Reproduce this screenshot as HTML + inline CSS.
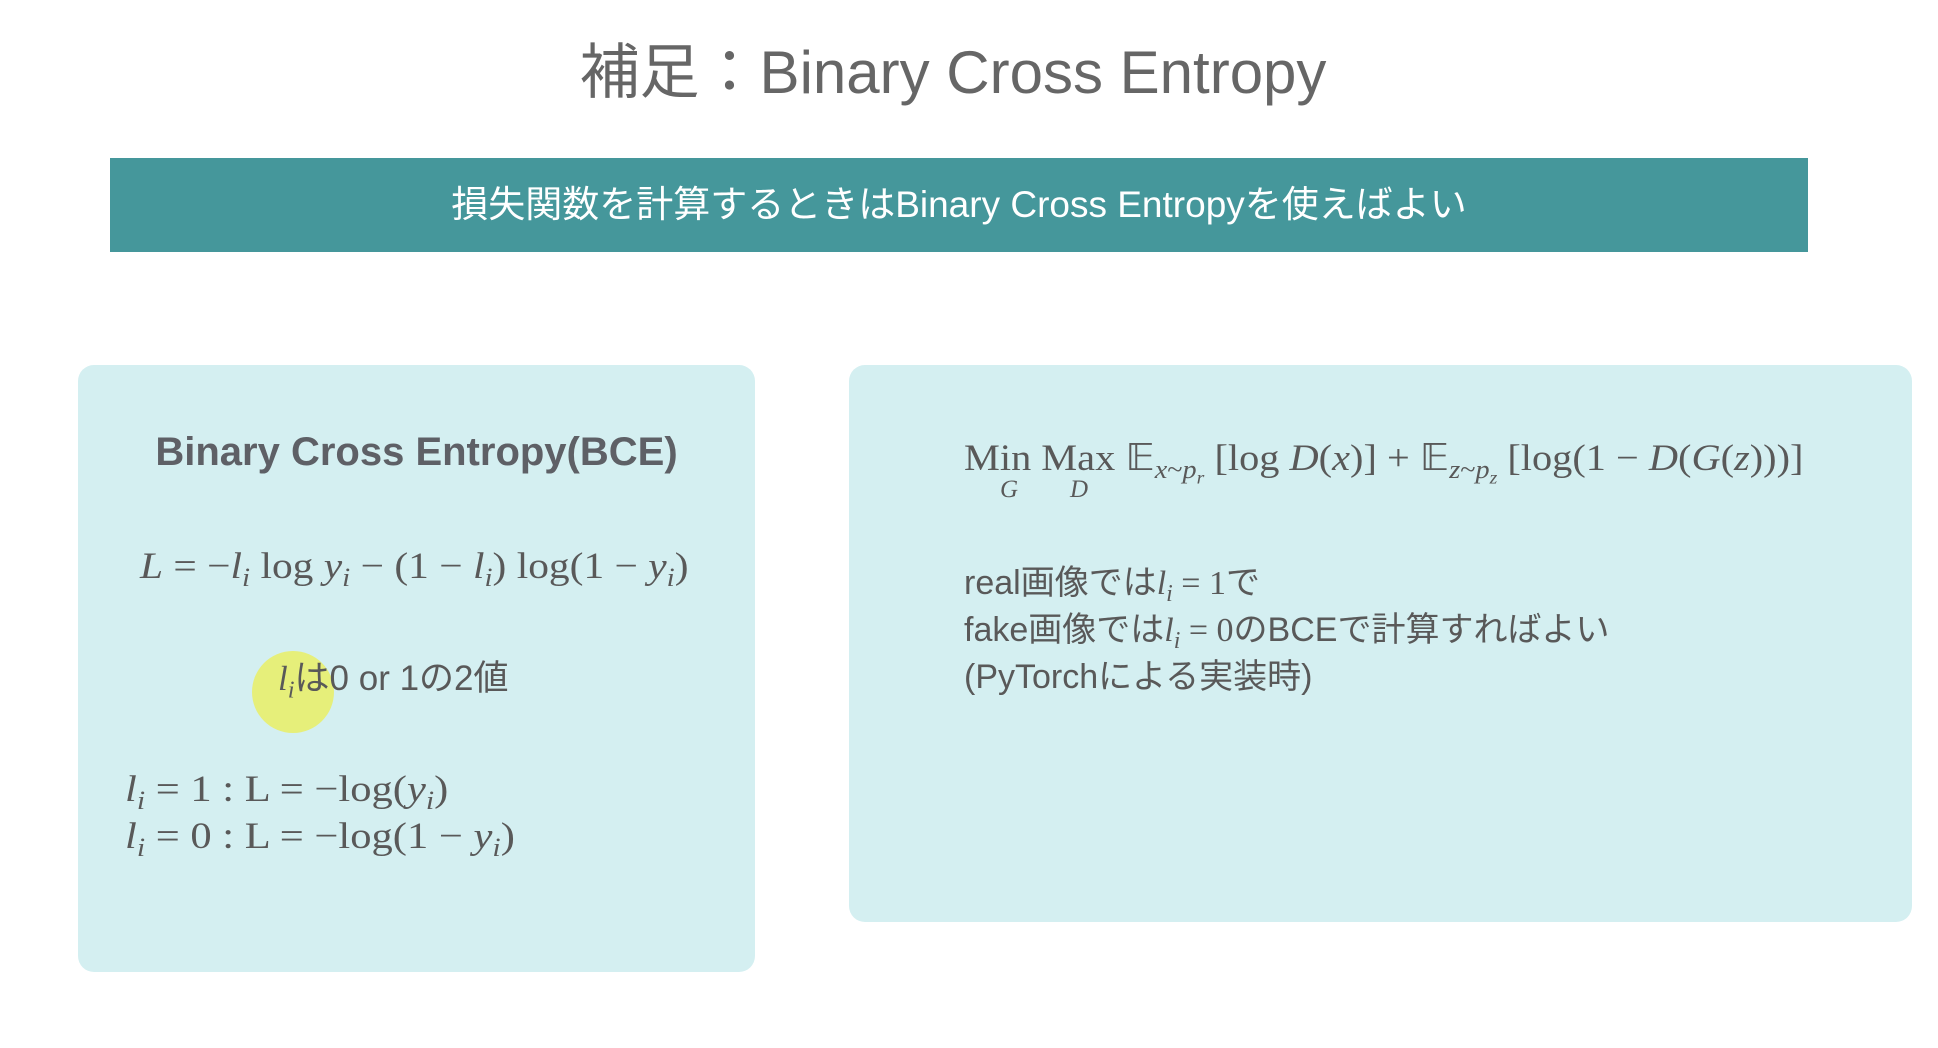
<!DOCTYPE html>
<html><head><meta charset="utf-8"><style>
body{margin:0;width:1938px;height:1048px;background:#fff;position:relative;overflow:hidden;font-family:"Liberation Sans","Noto Sans CJK JP",sans-serif;color:#595959}
.a{position:absolute;white-space:nowrap}
.m{font-family:"Liberation Serif","Noto Serif CJK SC",serif}
i{font-style:italic}
sub{font-size:70%;vertical-align:-0.3em;line-height:0}
.sx{display:inline-block;transform-origin:0 50%}
</style></head><body>
<div class="a" style="left:0;width:1906px;top:24px;text-align:center;font-size:60px;color:#666">補足：Binary Cross Entropy</div>
<div class="a" style="left:110px;top:158px;width:1698px;height:94px;background:#45979b;color:#fff;font-size:37px;line-height:94px;text-align:center">損失関数を計算するときはBinary Cross Entropyを使えばよい</div>
<div class="a" style="left:78px;top:365px;width:677px;height:607px;background:#d4eff1;border-radius:16px"></div>
<div class="a" style="left:849px;top:365px;width:1063px;height:557px;background:#d4eff1;border-radius:16px"></div>
<div class="a" style="left:78px;width:677px;top:430px;text-align:center;font-size:40px;font-weight:bold;color:#5e6066">Binary Cross Entropy(BCE)</div>
<div class="a m" style="left:140px;top:545px;font-size:37px"><span class="sx" style="transform:scaleX(1.12)"><i>L</i> = −<i>l<sub>i</sub></i> log <i>y<sub>i</sub></i> − (1 − <i>l<sub>i</sub></i>) log(1 − <i>y<sub>i</sub></i>)</span></div>
<div class="a" style="left:252px;top:651px;width:82px;height:82px;border-radius:50%;background:#e6ef7a"></div>
<div class="a" style="left:278px;top:650px;font-size:35px"><span class="m"><i>l<sub>i</sub></i></span>は0 or 1の2値</div>
<div class="a m" style="left:125px;top:766px;font-size:37px;line-height:47px"><span class="sx" style="transform:scaleX(1.15)"><i>l<sub>i</sub></i> = 1 : L = −log(<i>y<sub>i</sub></i>)<br><i>l<sub>i</sub></i> = 0 : L = −log(1 − <i>y<sub>i</sub></i>)</span></div>
<div class="a m" style="left:964px;top:436px;font-size:37px"><span class="sx" style="transform:scaleX(1.09)">Min Max 𝔼<sub><i>x</i>~<i>p<sub>r</sub></i></sub> [log <i>D</i>(<i>x</i>)] + 𝔼<sub><i>z</i>~<i>p<sub>z</sub></i></sub> [log(1 − <i>D</i>(<i>G</i>(<i>z</i>)))]</span></div>
<div class="a m" style="left:1000px;top:476px;font-size:25px"><i>G</i></div>
<div class="a m" style="left:1070px;top:476px;font-size:25px"><i>D</i></div>
<div class="a" style="left:964px;top:560px;font-size:34px;line-height:46px">real画像では<span class="m"><i>l<sub>i</sub></i> = 1</span>で<br>fake画像では<span class="m"><i>l<sub>i</sub></i> = 0</span>のBCEで計算すればよい<br>(PyTorchによる実装時)</div>
</body></html>
